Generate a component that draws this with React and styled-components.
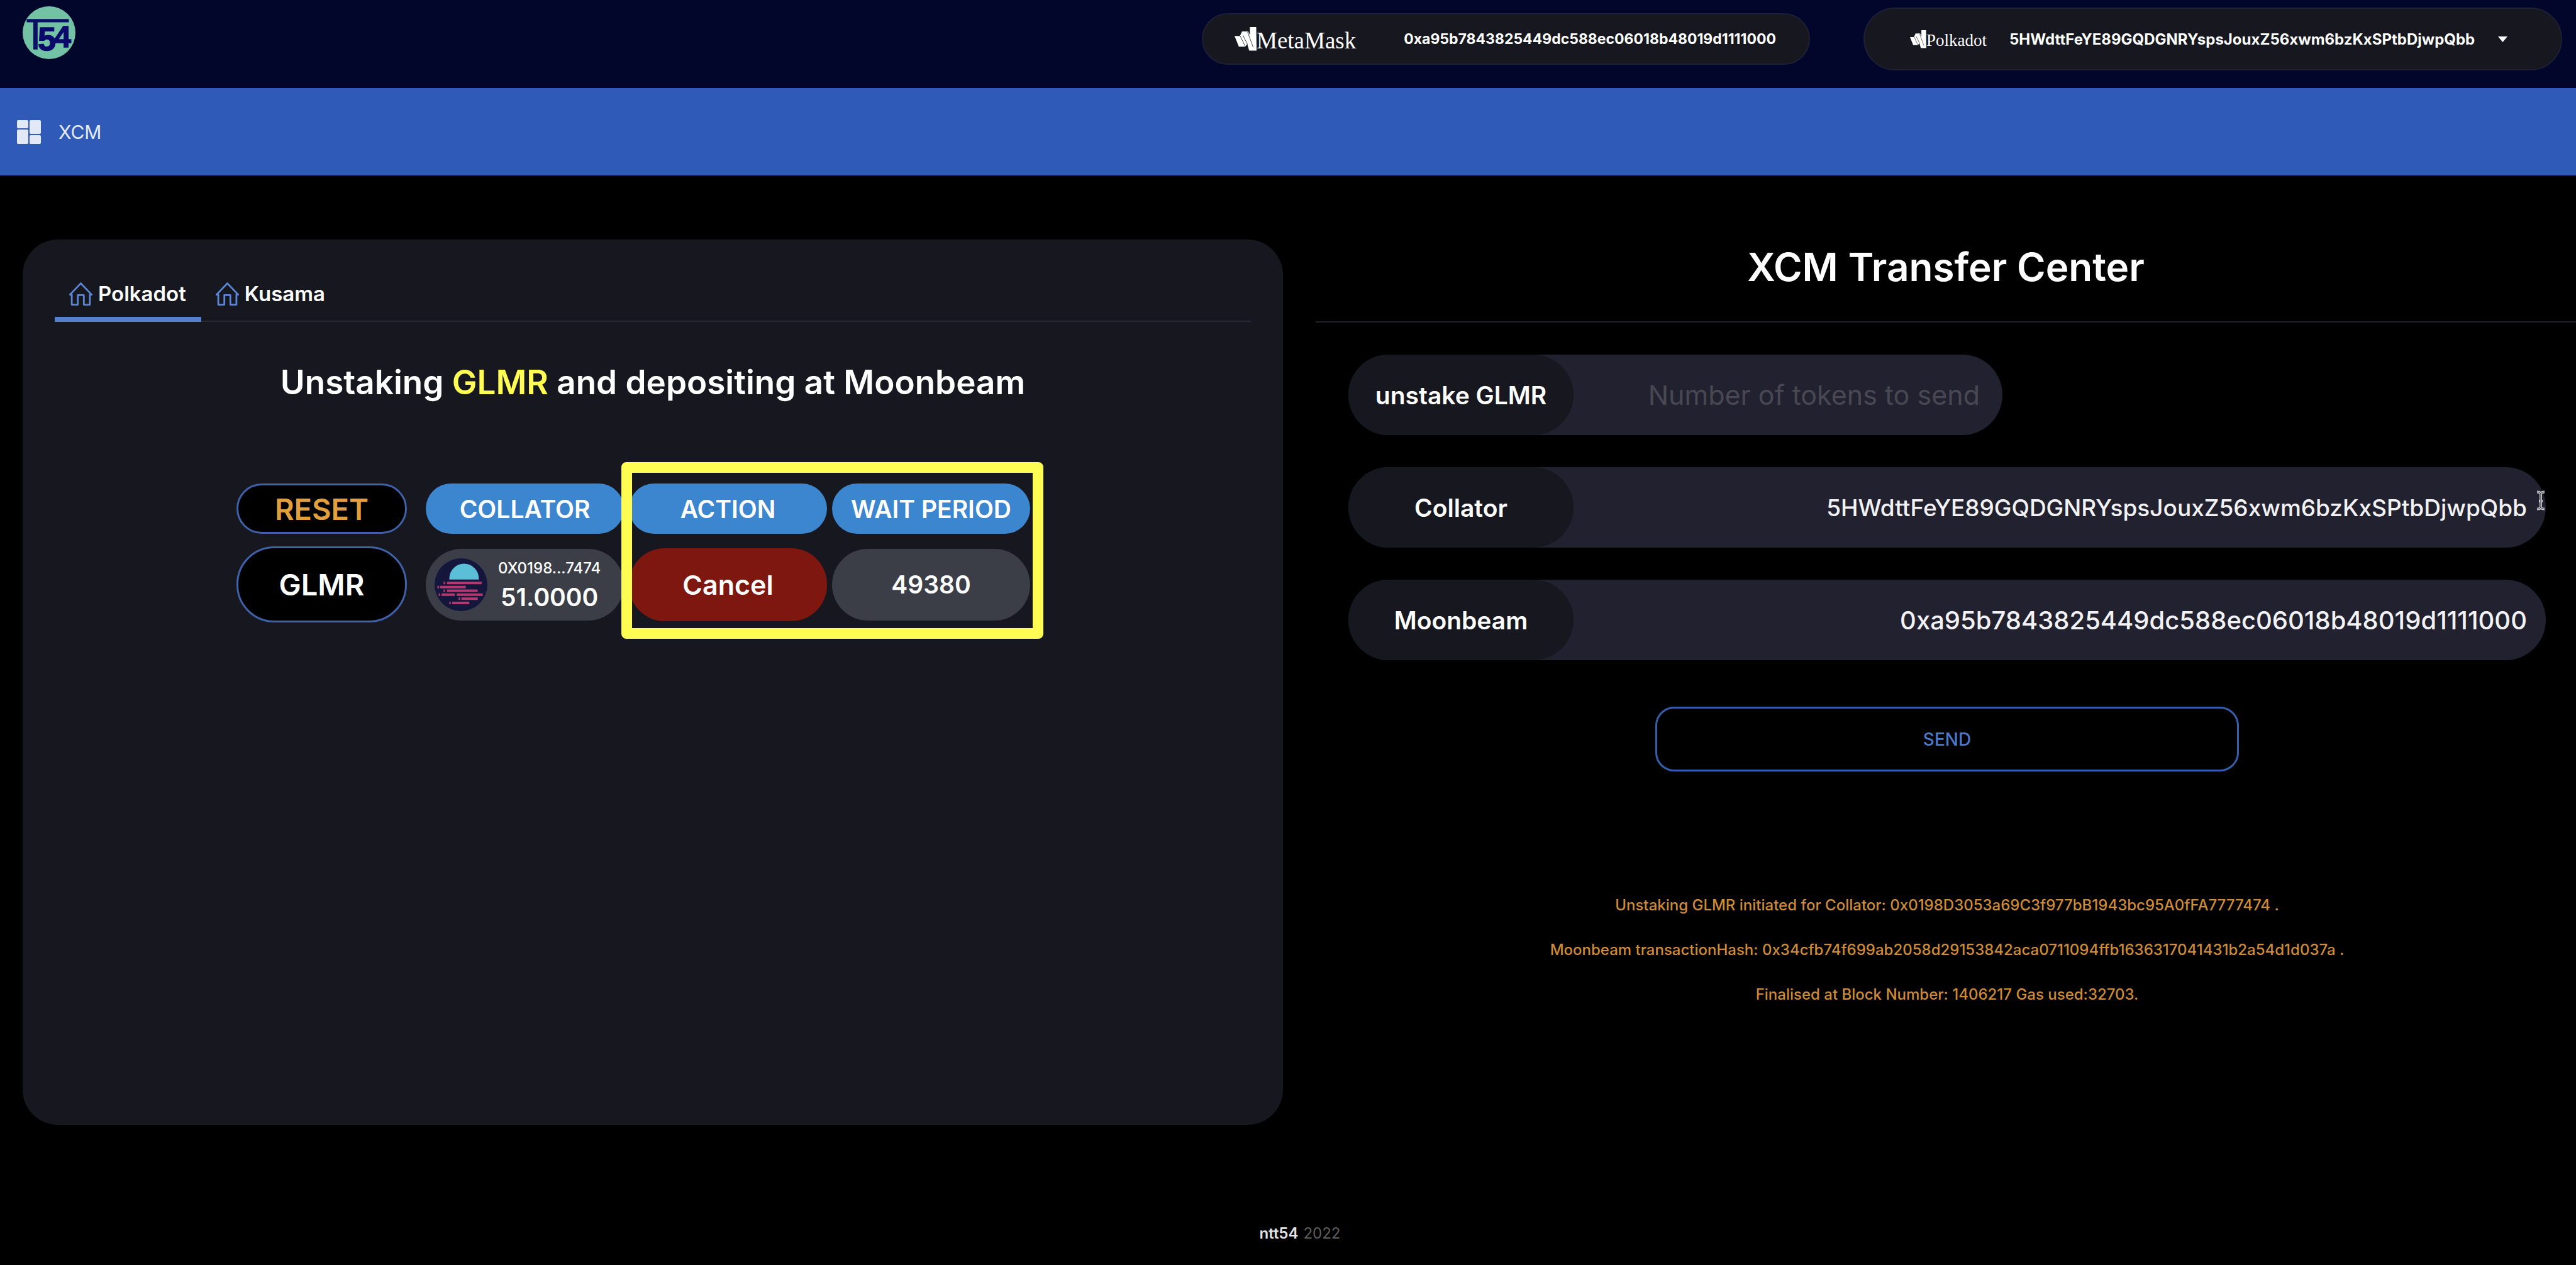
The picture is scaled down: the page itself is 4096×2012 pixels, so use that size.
import React from "react";
import styled, { createGlobalStyle, css } from "styled-components";

const color = {
  page: "#000000",
  header: "#03062b",
  nav: "#2f5ab8",
  panel: "#171720",
  field: "#22212f",
  line: "#292936",
  accent: "#4a7acb",
  outline: "#3f62ab",
  head: "#3b86ce",
  cell: "#3c3e47",
  danger: "#7d170f",
  orange: "#e2a03c",
  notice: "#cf8b37",
  highlight: "#fffd54",
};

const GlobalStyle = createGlobalStyle`
  *, *::before, *::after { box-sizing: border-box; }
  body { margin: 0; background: ${color.page}; }
  button, input, select { font: inherit; color: inherit; }
`;

const Page = styled.div`
  display: flex;
  flex-direction: column;
  min-height: 100vh;
  background: ${color.page};
  color: #fff;
  font-family: Inter, "Liberation Sans", sans-serif;
  font-size: 24px;
`;

/* ---------- header ---------- */

const Header = styled.header`
  display: flex;
  align-items: flex-start;
  padding: 10px 22px 26px 36px;
  background: ${color.header};
`;

const HomeLink = styled.a`
  display: block;
  height: 84px;
  margin-right: auto;
`;

const Accounts = styled.div`
  display: flex;
  align-items: center;
  gap: 85px;
  min-height: 104px;
`;

const pill = css`
  display: flex;
  align-items: center;
  border: 2px solid #1e2036;
  border-radius: 50px;
  background: ${color.panel};
  font-weight: 700;
`;

const MetaMaskButton = styled.button`
  ${pill}
  height: 82px;
  padding: 0 52px 0 50px;
  gap: 76px;
  font-size: 23px;
`;

const PolkadotPicker = styled.div`
  ${pill}
  height: 100px;
  padding: 0 85px 0 72px;
  gap: 36px;
  font-size: 24px;
`;

const AccountSelect = styled.select`
  appearance: none;
  padding: 0;
  border: 0;
  background: transparent;
  outline: none;
`;

const Brand = styled.span`
  display: flex;
  align-items: center;
  font-family: "Liberation Serif", serif;
  font-weight: 400;
  font-size: ${(p) => p.$size}px;
`;

const BrandName = styled.span`
  padding-top: 4px;
`;

const NavBar = styled.nav`
  display: flex;
  align-items: center;
  height: 139px;
  padding: 0 27px;
  background: ${color.nav};
`;

const NavLink = styled.a`
  display: flex;
  align-items: center;
  gap: 28px;
  color: #e6ebf8;
  font-size: 30px;
  text-decoration: none;
`;

/* ---------- layout ---------- */

const Main = styled.main`
  display: grid;
  grid-template-columns: 1fr 1fr;
  column-gap: 52px;
  align-items: start;
  padding: 102px 0 0 36px;
`;

const Panel = styled.section`
  min-height: 70vh;
  padding: 49px 51px;
  border-radius: 56px;
  background: ${color.panel};
`;

const Tabs = styled.div`
  display: flex;
  border-bottom: 2px solid ${color.line};
`;

const Tab = styled.button`
  display: flex;
  align-items: center;
  gap: 8px;
  height: 82px;
  margin-bottom: -2px;
  padding: 0 24px 0 22px;
  border: 0;
  border-bottom: 8px solid ${(p) => (p.$active ? "#5580cc" : "transparent")};
  background: transparent;
  font-size: 33px;
  font-weight: 600;
`;

const PanelTitle = styled.h1`
  margin: 64px 0 0;
  font-size: 53px;
  font-weight: 600;
  line-height: 64px;
  text-align: center;

  em {
    color: ${color.highlight};
    font-style: normal;
  }
`;

/* ---------- staking table ---------- */

const TableArea = styled.div`
  display: flex;
  justify-content: center;
  padding: 109px 62px 0 0;
`;

const TableFrame = styled.div`
  position: relative;
`;

const Highlight = styled.div`
  position: absolute;
  top: -14px;
  right: -13px;
  bottom: -6px;
  width: 671px;
  border: 17px solid ${color.highlight};
  border-radius: 8px;
  pointer-events: none;
`;

const StakingTable = styled.table`
  border-collapse: separate;
  border-spacing: 8px 20px;

  th, td { padding: 0; }
  th:first-child, td:first-child { padding-right: 22px; }
`;

const cell = css`
  display: flex;
  align-items: center;
  justify-content: center;
  width: 315px;
  height: 114px;
  border: 0;
  border-radius: 57px;
  background: ${color.cell};
  font-size: 39px;
  font-weight: 600;
`;

const HeadPill = styled.div`
  ${cell}
  height: 80px;
  border-radius: 40px;
  background: ${color.head};
`;

const tokenPill = css`
  ${cell}
  width: 271px;
  border: 3px solid ${color.outline};
  background: #000;
  font-size: 47px;
`;

const ResetButton = styled.button`
  ${tokenPill}
  height: 80px;
  color: ${color.orange};
`;

const TokenPill = styled.div`
  ${tokenPill}
  height: 121px;
  border-radius: 60px;
`;

const ValuePill = styled.div`
  ${cell}
`;

const CancelButton = styled.button`
  ${cell}
  height: 116px;
  background: ${color.danger};
  font-size: 43px;
`;

const CollatorPill = styled.div`
  ${cell}
  justify-content: flex-start;
  gap: 17px;
  padding-left: 14px;
`;

const CollatorText = styled.div`
  display: flex;
  flex-direction: column;
  align-items: center;
  padding-bottom: 6px;
  line-height: 46px;
`;

const CollatorName = styled.span`
  font-size: 24px;
  font-weight: 500;
`;

/* ---------- transfer form ---------- */

const TransferTitle = styled.h2`
  margin: 0;
  padding-bottom: 42px;
  border-bottom: 2px solid ${color.field};
  font-size: 62px;
  font-weight: 600;
  line-height: 88px;
  text-align: center;
`;

const Form = styled.form`
  display: flex;
  flex-direction: column;
  gap: 51px;
  padding: 51px 48px 0 52px;
`;

const FieldRow = styled.div`
  position: relative;
  display: flex;
  height: 128px;
  width: ${(p) => (p.$short ? "1040px" : "auto")};
  border-radius: 64px;
  background: ${color.field};
`;

const FieldLabel = styled.label`
  display: flex;
  flex: none;
  align-items: center;
  justify-content: center;
  width: 358px;
  border-radius: 64px;
  background: ${color.panel};
  font-size: 39px;
  font-weight: 600;
`;

const FieldInput = styled.input`
  flex: 1;
  min-width: 0;
  padding: 0 ${(p) => (p.$amount ? 36 : 30)}px;
  border: 0;
  outline: none;
  background: transparent;
  color: #f2f2f4;
  font-size: ${(p) => p.$size}px;
  font-weight: ${(p) => (p.$amount ? 400 : 500)};
  text-align: right;

  &::placeholder {
    color: #484853;
    opacity: 1;
  }
`;

const TextCursor = styled.svg`
  position: absolute;
  top: 37px;
  right: 0;
`;

const SendButton = styled.button`
  align-self: center;
  width: 928px;
  height: 103px;
  margin-top: 23px;
  border: 3px solid #365fab;
  border-radius: 30px;
  background: transparent;
  color: ${color.accent};
  font-size: 28px;
  font-weight: 500;
`;

const Notices = styled.div`
  padding: 177px 48px 0 52px;
  color: ${color.notice};
  font-weight: 500;
  line-height: 71px;
  text-align: center;

  p { margin: 0; }
`;

const Footer = styled.footer`
  display: flex;
  justify-content: center;
  gap: 8px;
  margin-top: auto;
  padding: 0 0 32px 38px;
  color: #5e5e5e;
  line-height: 36px;

  strong {
    color: #e4e4e4;
    font-weight: 600;
  }
`;

/* ---------- drawings ---------- */

const T54Logo = () => (
  <svg width="84" height="84" viewBox="0 0 104 104" role="img" aria-label="T54">
    <circle cx="52" cy="52" r="52" fill="#74c2a6" />
    <path d="M8 25H91V31.500H29.500V85H21V31.500H8Z" fill="#0b1064" />
    <g
      fill="#0b0a6b"
      stroke="#0b0a6b"
      strokeWidth="2"
      fontFamily="'Liberation Sans', sans-serif"
      fontWeight="700"
    >
      <text x="30" y="87" fontSize="64">5</text>
      <text x="62" y="81" fontSize="60">4</text>
    </g>
  </svg>
);

const WalletMark = ({ size }) => (
  <svg width={size - 3} height={size} viewBox="0 0 132 146" preserveAspectRatio="none" aria-hidden="true">
    <path d="M0 55H32L45 27H82L92 50V0H130L132 144H88L76 104L64 120H26Z" fill="#fff" />
    <path d="M34 55L64 118M50 50L78 106M78 30L112 124" stroke="#171720" strokeWidth="3" fill="none" />
  </svg>
);

const DashboardIcon = () => (
  <svg width="38" height="38" viewBox="0 0 38 38" fill="#e3e8f7" aria-hidden="true">
    <rect width="18" height="13" rx="2" />
    <rect y="15" width="18" height="23" rx="2" />
    <rect x="20" width="18" height="22" rx="2" />
    <rect x="20" y="24" width="18" height="14" rx="2" />
  </svg>
);

const HouseIcon = () => (
  <svg width="39" height="40" viewBox="0 0 48 50" fill="none" stroke="#5b87d6" strokeWidth="3.5" aria-hidden="true">
    <path d="M2.500 27L24 4.500L45.500 27H42V47H30V28H18V47H6V27Z" strokeLinejoin="round" />
  </svg>
);

const Caret = () => (
  <svg width="15" height="9" viewBox="0 0 15 9" fill="#fff" aria-hidden="true">
    <path d="M0 0H15L7.500 9Z" />
  </svg>
);

const streaks = [
  [17.8, 46.5, 3], [24.6, 46.5, 69],
  [5.5, 54.7, 3], [10.5, 54.7, 51.5],
  [17.8, 62, 3], [24.6, 62, 61],
  [8, 69.8, 3], [14, 69.8, 26], [44, 69.8, 51.7],
  [47.6, 77.8, 3], [53.3, 77.8, 32.5],
  [29.3, 86.2, 3], [35, 86.2, 34],
];

const MoonbeamIcon = () => (
  <svg width="84" height="84" viewBox="0 0 105 105" aria-hidden="true">
    <circle cx="52.500" cy="52.500" r="52.500" fill="#15163c" />
    <path d="M29.300 42.300V40A29.300 29.300 0 0 1 87.900 40V42.300Z" fill="#5bbfd8" />
    {streaks.map(([x, y, w]) => (
      <rect key={`${x}-${y}`} x={x} y={y} width={w} height="5" fill="#b23a70" />
    ))}
  </svg>
);

const POLKADOT_ADDRESS = "5HWdttFeYE89GQDGNRYspsJouxZ56xwm6bzKxSPtbDjwpQbb";
const METAMASK_ADDRESS = "0xa95b7843825449dc588ec06018b48019d1111000";

export default function App() {
  return (
    <Page>
      <GlobalStyle />
      <Header>
        <HomeLink href="#home"><T54Logo /></HomeLink>
        <Accounts>
          <MetaMaskButton type="button">
            <Brand $size={37}><WalletMark size={38} /><BrandName>MetaMask</BrandName></Brand>
            <span>{METAMASK_ADDRESS}</span>
          </MetaMaskButton>
          <PolkadotPicker>
            <Brand $size={27} as="label" htmlFor="account">
              <WalletMark size={29} /><BrandName>Polkadot</BrandName>
            </Brand>
            <AccountSelect id="account" defaultValue={POLKADOT_ADDRESS}>
              <option>{POLKADOT_ADDRESS}</option>
            </AccountSelect>
            <Caret />
          </PolkadotPicker>
        </Accounts>
      </Header>

      <NavBar>
        <NavLink href="#xcm"><DashboardIcon />XCM</NavLink>
      </NavBar>

      <Main>
        <Panel>
          <Tabs role="tablist">
            <Tab type="button" role="tab" aria-selected="true" $active><HouseIcon />Polkadot</Tab>
            <Tab type="button" role="tab" aria-selected="false"><HouseIcon />Kusama</Tab>
          </Tabs>
          <PanelTitle>Unstaking <em>GLMR</em> and depositing at Moonbeam</PanelTitle>
          <TableArea>
            <TableFrame>
              <StakingTable>
                <thead>
                  <tr>
                    <th><ResetButton type="button">RESET</ResetButton></th>
                    <th scope="col"><HeadPill>COLLATOR</HeadPill></th>
                    <th scope="col"><HeadPill>ACTION</HeadPill></th>
                    <th scope="col"><HeadPill>WAIT PERIOD</HeadPill></th>
                  </tr>
                </thead>
                <tbody>
                  <tr>
                    <td><TokenPill>GLMR</TokenPill></td>
                    <td>
                      <CollatorPill>
                        <MoonbeamIcon />
                        <CollatorText>
                          <CollatorName>0X0198...7474</CollatorName>
                          <span>51.0000</span>
                        </CollatorText>
                      </CollatorPill>
                    </td>
                    <td><CancelButton type="button">Cancel</CancelButton></td>
                    <td><ValuePill>49380</ValuePill></td>
                  </tr>
                </tbody>
              </StakingTable>
              <Highlight />
            </TableFrame>
          </TableArea>
        </Panel>

        <section>
          <TransferTitle>XCM Transfer Center</TransferTitle>
          <Form>
            <FieldRow $short>
              <FieldLabel htmlFor="amount">unstake GLMR</FieldLabel>
              <FieldInput id="amount" inputMode="decimal" placeholder="Number of tokens to send" $amount $size={43} />
            </FieldRow>
            <FieldRow>
              <FieldLabel htmlFor="collator">Collator</FieldLabel>
              <FieldInput id="collator" defaultValue={POLKADOT_ADDRESS} $size={37} />
              <TextCursor width="16" height="32" viewBox="0 0 16 32" fill="none" aria-hidden="true">
                <path d="M2 2.500Q8 2.500 8 6Q8 2.500 14 2.500M8 5V27M2 29.500Q8 29.500 8 26Q8 29.500 14 29.500M5 17H11" stroke="#d0d0d4" strokeWidth="4" />
                <path d="M2 2.500Q8 2.500 8 6Q8 2.500 14 2.500M8 5V27M2 29.500Q8 29.500 8 26Q8 29.500 14 29.500" stroke="#22212f" strokeWidth="1" />
              </TextCursor>
            </FieldRow>
            <FieldRow>
              <FieldLabel htmlFor="moonbeam">Moonbeam</FieldLabel>
              <FieldInput id="moonbeam" defaultValue={METAMASK_ADDRESS} $size={40} />
            </FieldRow>
            <SendButton type="button">SEND</SendButton>
          </Form>
          <Notices role="status">
            <p>Unstaking GLMR initiated for Collator: 0x0198D3053a69C3f977bB1943bc95A0fFA7777474 .</p>
            <p>Moonbeam transactionHash: 0x34cfb74f699ab2058d29153842aca0711094ffb1636317041431b2a54d1d037a .</p>
            <p>Finalised at Block Number: 1406217 Gas used:32703.</p>
          </Notices>
        </section>
      </Main>

      <Footer><strong>ntt54</strong><span>2022</span></Footer>
    </Page>
  );
}
